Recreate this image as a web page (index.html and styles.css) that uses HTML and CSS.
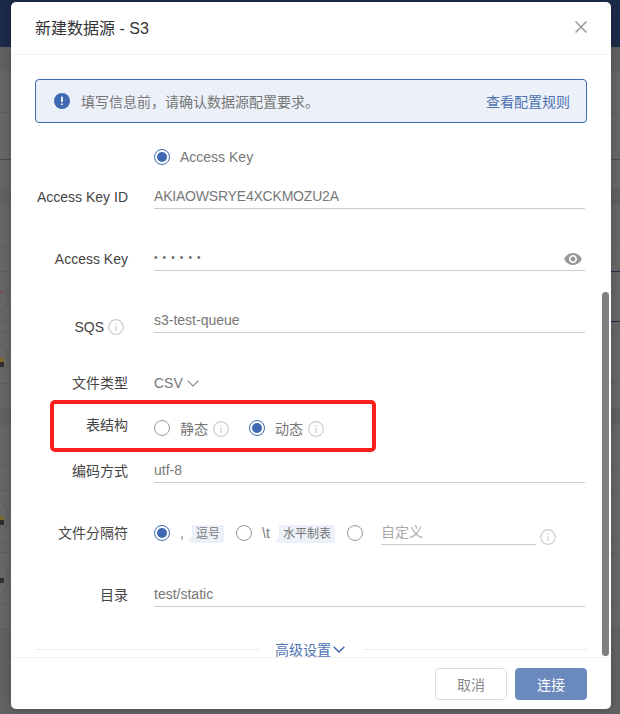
FILE: index.html
```html
<!DOCTYPE html>
<html lang="zh-CN">
<head>
<meta charset="utf-8">
<title>新建数据源 - S3</title>
<link rel="stylesheet" href="styles.css">
</head>
<body>
<div class="backdrop">
  <div class="bg-row navy"></div>
  <div class="bg-row band"></div>
  <div class="bg-row"></div>
  <div class="bg-row dark-line"></div>
  <div class="bg-row no-line"></div>
  <div class="bg-row band"></div>
  <div class="bg-row"></div>
  <div class="bg-row mark"></div>
  <div class="bg-row mark"><span class="avatar"><i class="glyph red"></i></span></div>
  <div class="bg-row"></div>
  <div class="bg-row"><span class="avatar"><i class="glyph gold"></i></span></div>
  <div class="bg-row no-line"></div>
  <div class="bg-row band"></div>
  <div class="bg-row"></div>
  <div class="bg-row"></div>
  <div class="bg-row"><span class="avatar"><i class="glyph gold"></i></span></div>
  <div class="bg-row"></div>
  <div class="bg-row"><span class="avatar"><i class="glyph ink"></i></span></div>
  <div class="bg-row"></div>
  <div class="bg-row end"></div>
</div>

<section class="modal">
  <header class="modal-head">
    <h1 class="modal-title">新建数据源 - S3</h1>
    <svg class="close" viewBox="0 0 12 12" aria-label="关闭"><path d="M.5.5l11 11M11.500.5l-11 11"/></svg>
  </header>

  <div class="modal-body">
    <div class="alert">
      <svg class="alert-icon" viewBox="0 0 16 16"><circle cx="8" cy="8" r="8"/><rect x="7" y="3.600" width="2" height="5.600" rx=".8"/><rect x="7" y="10.300" width="2" height="2" rx="1"/></svg>
      <span class="alert-text">填写信息前，请确认数据源配置要求。</span>
      <a class="alert-link">查看配置规则</a>
    </div>

    <div class="row row-method">
      <span class="label"></span>
      <div class="options"><span class="radio on"></span><span class="opt-text">Access Key</span></div>
    </div>

    <div class="row">
      <span class="label">Access Key ID</span>
      <div class="field field-key">AKIAOWSRYE4XCKMOZU2A</div>
    </div>

    <div class="row">
      <span class="label">Access Key</span>
      <div class="field password"><span class="dots">••••••</span>
        <svg class="eye" viewBox="1 4.500 22 15"><path d="M12 4.500C7 4.500 2.730 7.610 1 12c1.730 4.390 6 7.500 11 7.500s9.270-3.110 11-7.500c-1.730-4.390-6-7.500-11-7.500zM12 17c-2.760 0-5-2.240-5-5s2.240-5 5-5 5 2.240 5 5-2.240 5-5 5zm0-8c-1.660 0-3 1.340-3 3s1.340 3 3 3 3-1.340 3-3-1.340-3-3-3z"/></svg>
      </div>
    </div>

    <div class="row">
      <span class="label label-low">SQS<svg class="info" viewBox="0 0 16 16"><circle cx="8" cy="8" r="7.300"/><path d="M8 7v5M8 4v1.500"/></svg></span>
      <div class="field">s3-test-queue</div>
    </div>

    <div class="row row-type">
      <span class="label">文件类型</span>
      <div class="select">CSV<svg class="chev" viewBox="0 0 12 7"><path d="M.7.7L6 6l5.300-5.300"/></svg></div>
    </div>

    <div class="row row-schema">
      <span class="label">表结构</span>
      <div class="options options-low">
        <span class="radio"></span><span class="opt-text">静态</span>
        <svg class="info info-opt" viewBox="0 0 16 16"><circle cx="8" cy="8" r="7.300"/><path d="M8 7v5M8 4v1.500"/></svg>
        <span class="radio on radio-2"></span><span class="opt-text">动态</span>
        <svg class="info info-opt" viewBox="0 0 16 16"><circle cx="8" cy="8" r="7.300"/><path d="M8 7v5M8 4v1.500"/></svg>
      </div>
    </div>

    <div class="row">
      <span class="label">编码方式</span>
      <div class="field">utf-8</div>
    </div>

    <div class="row">
      <span class="label">文件分隔符</span>
      <div class="options">
        <span class="radio on"></span><span class="sep-char">,</span><span class="tag">逗号</span>
        <span class="radio"></span><span class="sep-char sep-tab">\t</span><span class="tag">水平制表</span>
        <span class="radio"></span>
        <span class="custom">自定义</span>
        <svg class="info info-custom" viewBox="0 0 16 16"><circle cx="8" cy="8" r="7.300"/><path d="M8 7v5M8 4v1.500"/></svg>
      </div>
    </div>

    <div class="row">
      <span class="label">目录</span>
      <div class="field">test/static</div>
    </div>

    <div class="advanced">
      <span class="adv-line"></span>
      <a class="adv-link">高级设置<svg class="chev chev-blue" viewBox="0 0 12 7"><path d="M.7.7L6 6l5.300-5.300"/></svg></a>
      <span class="adv-line"></span>
    </div>
  </div>

  <footer class="modal-foot">
    <button class="btn btn-cancel">取消</button>
    <button class="btn btn-primary">连接</button>
  </footer>

  <div class="scroll-thumb"></div>
  <div class="highlight"></div>
</section>
</body>
</html>
```
FILE: styles.css
```css
* { box-sizing: border-box; }
html, body { margin: 0; height: 100%; }
body {
  position: relative;
  overflow: hidden;
  background: #666;
  font-family: "Liberation Sans", "Noto Sans CJK SC", sans-serif;
  font-size: 14px;
  color: #444;
}

/* dimmed page behind the dialog */
.backdrop {
  height: 714px;
  display: grid;
  grid-template-rows: 47px 24px 42px 47px 29px 16px 42px 25px 50px 11px 51px 24px 17px 41px 25px 52px 10px 51px 25px 1fr;
}
.bg-row {
  position: relative;
  overflow: hidden;
  border-bottom: 1px solid #5c5c5c;
}
.navy { background: #1c2b4a; border-bottom: 0; }
.band { background: #5f6061; border-bottom-color: #5f6061; }
.dark-line { border-bottom-color: #4a4a4a; }
.no-line { border-bottom: 0; }
.end { background: #616262; border-bottom: 0; }
.bg-row.mark { overflow: visible; }
.mark::after {
  content: "";
  position: absolute;
  right: 0;
  bottom: -1px;
  width: 9px;
  height: 1px;
  background: #1f2c4c;
}
.avatar {
  position: absolute;
  left: -27px;
  top: 8px;
  width: 36px;
  height: 36px;
  border: 1px solid #5c5c5c;
  border-radius: 50%;
}
.glyph {
  position: absolute;
  right: 4px;
  top: 16px;
  width: 4px;
}
.red { height: 3px; top: 10px; background: #70525a; }
.gold { height: 9px; background: linear-gradient(#7a6a2c 45%, #2e2e2e 45%); }
.ink { height: 5px; background: #333; }

/* dialog */
.modal {
  position: absolute;
  left: 11px;
  top: 2px;
  width: 600px;
  height: 707px;
  display: flex;
  flex-direction: column;
  background: #fff;
  border-radius: 5px;
  box-shadow: 0 0 10px rgba(0, 0, 0, .22);
  overflow: hidden;
}
.modal-head {
  flex: none;
  height: 53px;
  padding: 0 24px;
  display: flex;
  align-items: center;
  justify-content: space-between;
  border-bottom: 1px solid #f0f0f0;
}
.modal-title {
  margin: 0;
  font-size: 16px;
  font-weight: 400;
  color: #333;
  position: relative;
  top: -1px;
}
.close {
  width: 12px;
  height: 12px;
  fill: none;
  stroke: #999;
  stroke-width: 1.500;
  position: relative;
  top: -1px;
}

.modal-body {
  flex: 1;
  min-height: 0;
  overflow: hidden;
  padding: 24px 24px 0;
}
.alert {
  height: 44px;
  padding: 0 16px 0 18px;
  display: flex;
  align-items: center;
  background: #ecf0f8;
  border: 1px solid #3f69b0;
  border-radius: 4px;
}
.alert-icon { flex: none; width: 16px; height: 16px; margin-right: 11px; }
.alert-icon circle { fill: #3f69b0; }
.alert-icon rect { fill: #ecf0f8; }
.alert-text { flex: 1; color: #777; }
.alert-link { color: #4f73b2; }

.row {
  display: flex;
  align-items: flex-start;
  height: 24px;
  margin-top: 38px;
  margin-right: 2px;
}
.row-method { margin-top: 22px; margin-bottom: -22px; }
.row-type { margin-bottom: -20px; }
.row-schema { margin-bottom: -16px; }
.label {
  flex: none;
  width: 93px;
  margin-right: 26px;
  text-align: right;
  line-height: 24px;
  color: #444;
  white-space: nowrap;
}
.label-low {
  position: relative;
  left: -4px;
  top: 6px;
  display: flex;
  justify-content: flex-end;
  align-items: center;
}
.field {
  flex: 1;
  height: 24px;
  line-height: 23px;
  color: #777;
  border-bottom: 1px solid #ccc;
}
.field-key { letter-spacing: -.2px; }
.password {
  display: flex;
  justify-content: space-between;
  align-items: center;
}
.dots {
  font-size: 10px;
  letter-spacing: 5.100px;
  line-height: 21px;
  height: 23px;
  color: #666;
}
.eye { width: 18px; height: 12px; fill: #999; margin-right: 3px; }

.options {
  flex: 1;
  height: 24px;
  display: flex;
  align-items: center;
  color: #777;
}
.options-low { position: relative; top: 3px; }
.radio {
  flex: none;
  width: 16px;
  height: 16px;
  border: 1px solid #999;
  border-radius: 50%;
  display: flex;
  align-items: center;
  justify-content: center;
}
.radio.on { border-color: #3f69b0; }
.radio.on::before {
  content: "";
  width: 10px;
  height: 10px;
  border-radius: 50%;
  background: #3f69b0;
}
.radio-2 { margin-left: 20px; }
.opt-text { margin-left: 10px; }
.info {
  flex: none;
  width: 16px;
  height: 16px;
  fill: none;
  stroke: #ccc;
  stroke-width: 1.200;
}
.label .info { margin-left: 4px; }
.info-opt { margin-left: 5px; position: relative; top: 1px; }
.info-custom { margin-left: 4px; position: relative; top: 4px; }

.select {
  display: flex;
  align-items: center;
  height: 24px;
  color: #777;
}
.chev {
  width: 12px;
  height: 7px;
  fill: none;
  stroke: #888;
  stroke-width: 1.200;
  margin-left: 4px;
}
.chev-blue { stroke: #3f69b0; stroke-width: 1.500; margin-left: 2px; }

.sep-char { margin-left: 10px; width: 8px; color: #777; }
.sep-tab { width: 13px; }
.tag {
  flex: none;
  height: 18px;
  line-height: 18px;
  padding: 0 4px 0 8px;
  margin-right: 12px;
  font-size: 12px;
  color: #777;
  background: #ecf0f8;
  border-radius: 2px;
  clip-path: polygon(4px 0, 100% 0, 100% 100%, 0 100%, 4px 11px);
  position: relative;
  top: 1px;
}
.custom {
  width: 155px;
  height: 24px;
  margin-left: 18px;
  line-height: 22px;
  color: #aaa;
  border-bottom: 1px solid #ccc;
}

.advanced {
  display: flex;
  align-items: center;
  gap: 16px;
  height: 16px;
  margin-top: 34px;
  color: #4f73b2;
}
.adv-line { flex: 1; height: 1px; background: #eee; }
.adv-link { display: flex; align-items: center; margin-right: 2px; }

.modal-foot {
  flex: none;
  height: 52px;
  padding: 10px 24px 0;
  display: flex;
  justify-content: flex-end;
  gap: 8px;
  border-top: 1px solid #f0f0f0;
}
.btn {
  width: 72px;
  height: 32px;
  padding: 0;
  font: inherit;
  border-radius: 4px;
}
.btn-cancel { background: #fff; border: 1px solid #ddd; color: #888; }
.btn-primary { background: #6a89bd; border: 1px solid #6a89bd; color: #fff; }

.scroll-thumb {
  position: absolute;
  left: 591px;
  top: 290px;
  width: 7px;
  height: 364px;
  border-radius: 4px;
  background: #7f7f7f;
}
.highlight {
  position: absolute;
  left: 39px;
  top: 398px;
  width: 326px;
  height: 52px;
  border: 4px solid #fb1f1b;
  border-radius: 5px;
}
```
